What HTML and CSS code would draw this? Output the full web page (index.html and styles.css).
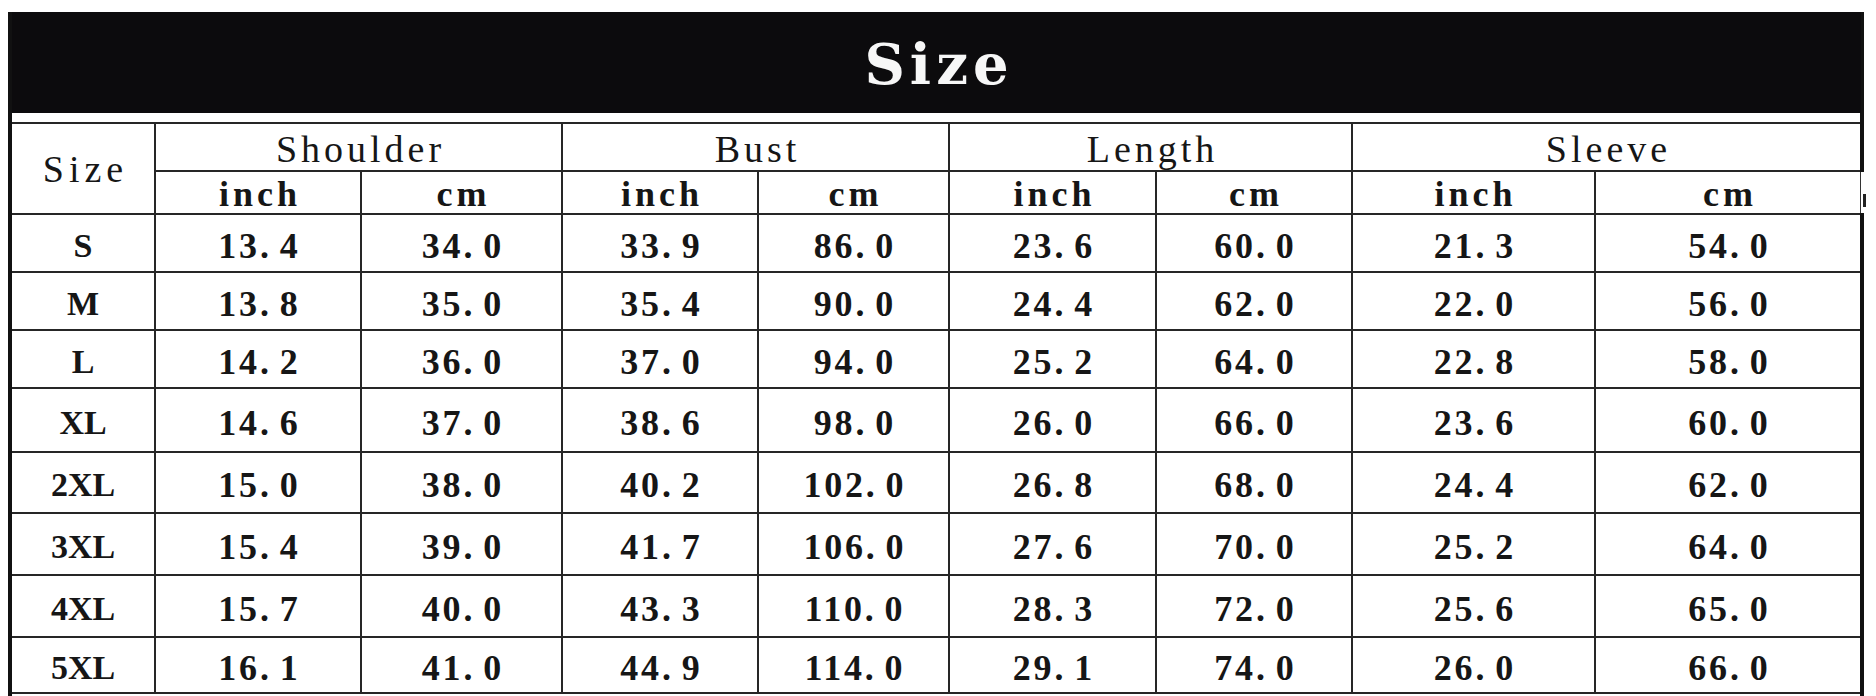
FILE: index.html
```html
<!DOCTYPE html>
<html lang="en">
<head>
<meta charset="utf-8">
<title>Size chart</title>
<link rel="stylesheet" href="styles.css">
</head>
<body>
<div class="sheet">
  <div class="banner">Size</div>
  <div class="spacer"></div>
  <div class="chart">
    <div class="cell head size-head">Size</div>
    <div class="cell head group">Shoulder</div>
    <div class="cell head group">Bust</div>
    <div class="cell head group">Length</div>
    <div class="cell head group">Sleeve</div>

    <div class="cell sub">inch</div><div class="cell sub">cm</div>
    <div class="cell sub">inch</div><div class="cell sub">cm</div>
    <div class="cell sub">inch</div><div class="cell sub">cm</div>
    <div class="cell sub">inch</div><div class="cell sub last-sub">cm</div>

    <div class="cell lbl">S</div><div class="cell num">13<span class="dot">.</span>4</div><div class="cell num">34<span class="dot">.</span>0</div><div class="cell num">33<span class="dot">.</span>9</div><div class="cell num">86<span class="dot">.</span>0</div><div class="cell num">23<span class="dot">.</span>6</div><div class="cell num">60<span class="dot">.</span>0</div><div class="cell num">21<span class="dot">.</span>3</div><div class="cell num">54<span class="dot">.</span>0</div>
    <div class="cell lbl">M</div><div class="cell num">13<span class="dot">.</span>8</div><div class="cell num">35<span class="dot">.</span>0</div><div class="cell num">35<span class="dot">.</span>4</div><div class="cell num">90<span class="dot">.</span>0</div><div class="cell num">24<span class="dot">.</span>4</div><div class="cell num">62<span class="dot">.</span>0</div><div class="cell num">22<span class="dot">.</span>0</div><div class="cell num">56<span class="dot">.</span>0</div>
    <div class="cell lbl">L</div><div class="cell num">14<span class="dot">.</span>2</div><div class="cell num">36<span class="dot">.</span>0</div><div class="cell num">37<span class="dot">.</span>0</div><div class="cell num">94<span class="dot">.</span>0</div><div class="cell num">25<span class="dot">.</span>2</div><div class="cell num">64<span class="dot">.</span>0</div><div class="cell num">22<span class="dot">.</span>8</div><div class="cell num">58<span class="dot">.</span>0</div>
    <div class="cell lbl">XL</div><div class="cell num">14<span class="dot">.</span>6</div><div class="cell num">37<span class="dot">.</span>0</div><div class="cell num">38<span class="dot">.</span>6</div><div class="cell num">98<span class="dot">.</span>0</div><div class="cell num">26<span class="dot">.</span>0</div><div class="cell num">66<span class="dot">.</span>0</div><div class="cell num">23<span class="dot">.</span>6</div><div class="cell num">60<span class="dot">.</span>0</div>
    <div class="cell lbl">2XL</div><div class="cell num">15<span class="dot">.</span>0</div><div class="cell num">38<span class="dot">.</span>0</div><div class="cell num">40<span class="dot">.</span>2</div><div class="cell num">102<span class="dot">.</span>0</div><div class="cell num">26<span class="dot">.</span>8</div><div class="cell num">68<span class="dot">.</span>0</div><div class="cell num">24<span class="dot">.</span>4</div><div class="cell num">62<span class="dot">.</span>0</div>
    <div class="cell lbl">3XL</div><div class="cell num">15<span class="dot">.</span>4</div><div class="cell num">39<span class="dot">.</span>0</div><div class="cell num">41<span class="dot">.</span>7</div><div class="cell num">106<span class="dot">.</span>0</div><div class="cell num">27<span class="dot">.</span>6</div><div class="cell num">70<span class="dot">.</span>0</div><div class="cell num">25<span class="dot">.</span>2</div><div class="cell num">64<span class="dot">.</span>0</div>
    <div class="cell lbl">4XL</div><div class="cell num">15<span class="dot">.</span>7</div><div class="cell num">40<span class="dot">.</span>0</div><div class="cell num">43<span class="dot">.</span>3</div><div class="cell num">110<span class="dot">.</span>0</div><div class="cell num">28<span class="dot">.</span>3</div><div class="cell num">72<span class="dot">.</span>0</div><div class="cell num">25<span class="dot">.</span>6</div><div class="cell num">65<span class="dot">.</span>0</div>
    <div class="cell lbl">5XL</div><div class="cell num">16<span class="dot">.</span>1</div><div class="cell num">41<span class="dot">.</span>0</div><div class="cell num">44<span class="dot">.</span>9</div><div class="cell num">114<span class="dot">.</span>0</div><div class="cell num">29<span class="dot">.</span>1</div><div class="cell num">74<span class="dot">.</span>0</div><div class="cell num">26<span class="dot">.</span>0</div><div class="cell num">66<span class="dot">.</span>0</div>
  </div>
  <div class="tail"></div>
</div>
</body>
</html>
```

FILE: styles.css
```css
html, body {
  margin: 0;
  padding: 0;
  background: #ffffff;
}

body {
  font-family: "Liberation Serif", "Times New Roman", serif;
  color: #161616;
}

.sheet {
  margin: 12px 0 0 8px;
  width: 1848px;
  border-left: 4px solid #111;
  border-right: 4px solid #111;
}

.banner {
  height: 101px;
  background: #0c0b0d;
  color: #f7f7f7;
  font-family: "DejaVu Serif", "Liberation Serif", serif;
  font-weight: 700;
  font-size: 56px;
  letter-spacing: 5px;
  padding-left: 5px;
  display: flex;
  align-items: center;
  justify-content: center;
  padding-top: 2px;
  box-sizing: border-box;
  margin-right: -1px;
}

.spacer {
  height: 9px;
}

.chart {
  display: grid;
  grid-template-columns: 142px 204px 199px 194px 189px 205px 194px 241px 264px;
  grid-template-rows: 46px 41px 56px 56px 56px 62px 59px 60px 60px 54px;
  gap: 2px;
  background: #262626;
  border-top: 2px solid #262626;
  border-bottom: 2px solid #262626;
}

.cell {
  background: #ffffff;
  display: flex;
  align-items: center;
  justify-content: center;
  line-height: 1;
  white-space: nowrap;
}

.head {
  font-size: 38px;
  font-weight: 400;
  letter-spacing: 4px;
  padding-left: 4px;
}

.size-head {
  grid-row: span 2;
  letter-spacing: 5px;
  padding-left: 5px;
}

.group {
  grid-column: span 2;
  padding-top: 4px;
}

.sub {
  font-size: 36px;
  font-weight: 700;
  letter-spacing: 4px;
  padding-left: 4px;
  padding-top: 2px;
}

.lbl {
  font-size: 34px;
  font-weight: 700;
  padding-top: 5px;
}

.num {
  font-size: 36px;
  font-weight: 700;
  letter-spacing: 2.8px;
  padding-left: 2.8px;
  padding-top: 5px;
}

.dot {
  margin-right: 8px;
}

.last-sub {
  position: relative;
}

.last-sub::after {
  content: "";
  position: absolute;
  top: 0;
  bottom: 0;
  right: -4px;
  width: 4px;
  background: #ffffff;
  border-left: 1px solid #333;
  box-sizing: border-box;
}

.last-sub::before {
  content: "";
  position: absolute;
  right: -6px;
  top: 22px;
  width: 3px;
  height: 13px;
  background: #222;
  z-index: 1;
}

.tail {
  height: 6px;
}
```
